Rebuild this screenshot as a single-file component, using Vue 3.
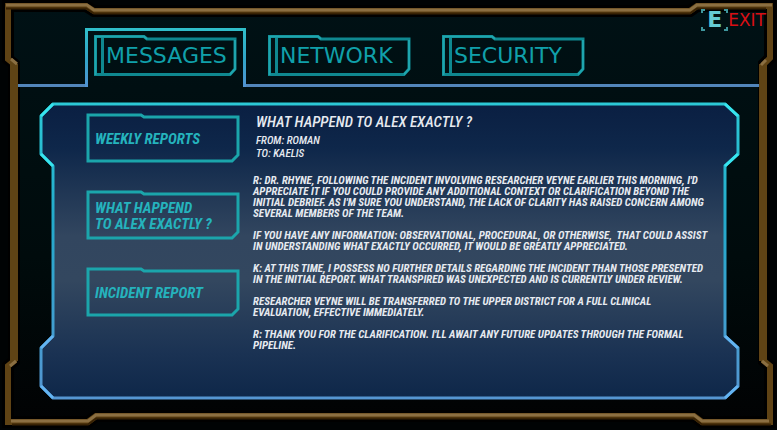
<template>
  <div class="terminal">
    <svg class="frame" viewBox="0 0 777 430" preserveAspectRatio="none" aria-hidden="true">
      <defs>
        <linearGradient id="screenFill" x1="0" y1="0" x2="0" y2="1">
          <stop offset="0" stop-color="#001115" />
          <stop offset="0.6" stop-color="#000b0c" />
          <stop offset="1" stop-color="#010203" />
        </linearGradient>
      </defs>
      <path :d="framePath" fill="url(#screenFill)" stroke="#000" stroke-width="12" />
      <path :d="framePath" fill="none" stroke="#5f4315" stroke-width="6" />
      <path d="M14 64V361M763 64V361" stroke="#5f4315" stroke-width="8" />
      <path d="M6 8.500H86L94 13.500H690L697 8.500H766M12 424.500H88L96 418.500H694L702 424.500H771" class="frame-shade" />
      <path d="M6 5H87L94 10H690L697 5H772M11 421H88L96 415H694L702 421H769" class="frame-light" />
      <path d="M11 59L17 64M766 60L761 65M10 366L16 361M762 361L768 366" class="frame-light" />
    </svg>

    <nav class="tabs">
      <span class="line-start"></span>
      <div
        v-for="tab in tabs"
        :key="tab"
        class="tab-slot"
        :class="{ active: tab === activeTab }"
      >
        <button class="tab" type="button" @click="activeTab = tab">
          <svg class="outline" viewBox="0 0 143 41" preserveAspectRatio="none" aria-hidden="true">
            <path d="M1.500 1.500H50L53 4H141V34L136 39.500H1.500ZM8.500 2V39" stroke="#0f8890" />
            <path d="M1.500 40V1.500H50L53 4M141 5V34L136 39.500" stroke="#1fa5ae" class="thin" />
          </svg>
          <span>{{ tab }}</span>
        </button>
      </div>
      <span class="line-end"></span>
    </nav>

    <button class="exit" type="button">
      <span class="key">
        <svg viewBox="0 0 27 22" aria-hidden="true">
          <path d="M1 4V1H4M23 1H26V4M26 18V21H23M4 21H1V18" />
        </svg>
        <span>E</span>
      </span>
      <span class="exit-label">EXIT</span>
    </button>

    <main class="panel">
      <svg class="outline" viewBox="0 0 701 298" preserveAspectRatio="none" aria-hidden="true">
        <defs>
          <linearGradient id="panelFill" x1="0" y1="0" x2="0" y2="1">
            <stop offset="0" stop-color="#0a1f42" />
            <stop offset="0.15" stop-color="#0e274a" />
            <stop offset="0.45" stop-color="#32465f" />
            <stop offset="0.6" stop-color="#33475f" />
            <stop offset="0.85" stop-color="#1a3253" />
            <stop offset="1" stop-color="#0e2749" />
          </linearGradient>
          <linearGradient id="panelLine" x1="0" y1="0" x2="0" y2="1">
            <stop offset="0" stop-color="#2cc9d6" />
            <stop offset="0.4" stop-color="#24aacb" />
            <stop offset="1" stop-color="#5596d2" />
          </linearGradient>
        </defs>
        <path
          d="M14 2H686L699 14V52L686 64V234L699 246V284L686 296H14L2 284V246L14 234V64L2 52V14Z"
          fill="url(#panelFill)"
          stroke="url(#panelLine)"
        />
        <path d="M2 14L14 2M686 2L699 14M2 52L14 64M699 52L686 64" stroke="#37e4ee" />
        <path d="M2 246L14 234M686 234L699 246M2 284L14 296M699 284L686 296" stroke="#63b4f2" />
      </svg>

      <ul class="reports">
        <li v-for="report in reports" :key="report">
          <button class="report" type="button">
            <svg class="outline" viewBox="0 0 154 50" preserveAspectRatio="none" aria-hidden="true">
              <path d="M2 2H55L58 4H152V42L146 48H2Z" stroke="#1ba5ab" />
            </svg>
            <span>{{ report }}</span>
          </button>
        </li>
      </ul>

      <article class="message">
        <h1>WHAT HAPPEND TO ALEX EXACTLY ?</h1>
        <p class="meta">FROM: ROMAN</p>
        <p class="meta">TO: KAELIS</p>
        <div class="body">
          <p v-for="text in paragraphs" :key="text">{{ text }}</p>
        </div>
      </article>
    </main>
  </div>
</template>

<script setup>
import { ref } from 'vue'

const framePath =
  'M8 6H86L94 11H690L697 6H770V58L764 64V361L770 366V422H702L694 416H96L88 422H8V366L14 361V64L8 59Z'

const tabs = ['MESSAGES', 'NETWORK', 'SECURITY']
const activeTab = ref('MESSAGES')

const reports = ['WEEKLY REPORTS', 'WHAT HAPPEND\nTO ALEX EXACTLY ?', 'INCIDENT REPORT']

const paragraphs = [
  "R: DR. RHYNE, FOLLOWING THE INCIDENT INVOLVING RESEARCHER VEYNE EARLIER THIS MORNING, I'D\nAPPRECIATE IT IF YOU COULD PROVIDE ANY ADDITIONAL CONTEXT OR CLARIFICATION BEYOND THE\nINITIAL DEBRIEF. AS I'M SURE YOU UNDERSTAND, THE LACK OF CLARITY HAS RAISED CONCERN AMONG\nSEVERAL MEMBERS OF THE TEAM.",
  'IF YOU HAVE ANY INFORMATION: OBSERVATIONAL, PROCEDURAL, OR OTHERWISE,  THAT COULD ASSIST\nIN UNDERSTANDING WHAT EXACTLY OCCURRED, IT WOULD BE GREATLY APPRECIATED.',
  'K: AT THIS TIME, I POSSESS NO FURTHER DETAILS REGARDING THE INCIDENT THAN THOSE PRESENTED\nIN THE INITIAL REPORT. WHAT TRANSPIRED WAS UNEXPECTED AND IS CURRENTLY UNDER REVIEW.',
  'RESEARCHER VEYNE WILL BE TRANSFERRED TO THE UPPER DISTRICT FOR A FULL CLINICAL\nEVALUATION, EFFECTIVE IMMEDIATELY.',
  "R: THANK YOU FOR THE CLARIFICATION. I'LL AWAIT ANY FUTURE UPDATES THROUGH THE FORMAL\nPIPELINE."
]
</script>

<style>
body {
  margin: 0;
  background: #000304;
}
</style>

<style scoped>
.terminal {
  position: relative;
  display: flex;
  flex-direction: column;
  box-sizing: border-box;
  min-height: 100vh;
  padding: 28px 18px 30px;
  font-family: 'Roboto Condensed', Roboto, sans-serif;
}

button {
  margin: 0;
  padding: 0;
  border: 0;
  background: none;
  font: inherit;
  cursor: pointer;
}

.frame,
.outline {
  position: absolute;
  inset: 0;
  width: 100%;
  height: 100%;
}

.frame .frame-light {
  fill: none;
  stroke: #8b6f42;
  stroke-width: 3;
}

.frame .frame-shade {
  fill: none;
  stroke: #382204;
  stroke-width: 2;
}

.outline path {
  stroke-width: 3;
  vector-effect: non-scaling-stroke;
}

.tab .outline path,
.report .outline path {
  fill: none;
}

.outline .thin {
  stroke-width: 2;
}

.tabs {
  position: relative;
  display: flex;
}

.line-start,
.line-end {
  border-bottom: 3px solid #5286bb;
}

.line-start {
  width: 67px;
}

.line-end {
  flex: 1;
}

.tab-slot {
  padding: 7px 9px 8px 22px;
  border-bottom: 3px solid #5286bb;
}

.tab-slot.active {
  padding: 4px 6px 11px;
  border: 3px solid;
  border-bottom: 0;
  border-image: linear-gradient(#30bfca, #31a5c8 50%, #5591d4) 3;
}

.tab {
  position: relative;
  display: block;
  width: 143px;
  height: 41px;
  padding-left: 12px;
  font-family: 'DejaVu Sans', sans-serif;
  font-size: 22px;
  line-height: 41px;
  text-align: left;
  color: #10a0aa;
}

.tab span {
  position: relative;
}

.exit {
  position: absolute;
  top: 9px;
  right: 11px;
  display: flex;
  align-items: center;
  font-family: 'DejaVu Sans', sans-serif;
}

.key {
  position: relative;
  width: 27px;
  height: 22px;
  font-size: 22px;
  font-weight: 700;
  line-height: 22px;
  color: #64cbd4;
}

.key svg {
  position: absolute;
  inset: 0;
}

.key path {
  fill: none;
  stroke: #3f969d;
  stroke-width: 2;
}

.exit-label {
  font-size: 17px;
  line-height: 22px;
  color: #d80f14;
}

.panel {
  position: relative;
  display: flex;
  flex: 1;
  gap: 13px;
  margin: 15px 19px 0 21px;
  padding: 10px 15px 10px 47px;
}

.reports {
  position: relative;
  display: flex;
  flex: none;
  flex-direction: column;
  gap: 27px;
  width: 154px;
  margin: 0;
  padding: 1px 0 0;
  list-style: none;
}

.report {
  position: relative;
  display: flex;
  align-items: center;
  width: 100%;
  height: 50px;
  padding: 2px 0 0 9px;
  font-size: 15px;
  font-style: italic;
  font-weight: 700;
  line-height: 16px;
  text-align: left;
  white-space: pre;
  color: #25b3bd;
}

.report span {
  position: relative;
}

.message {
  position: relative;
  flex: 1;
  min-width: 0;
  font-style: italic;
  color: #e6eaf0;
}

.message h1 {
  margin: 0 0 2px;
  padding-left: 3px;
  font-size: 15px;
  font-weight: 500;
  line-height: 20px;
}

.meta {
  margin: 0;
  padding-left: 3px;
  font-size: 11px;
  font-weight: 500;
  line-height: 13px;
}

.body {
  margin-top: 15px;
  font-size: 11px;
  font-weight: 700;
  line-height: 11px;
  white-space: pre-wrap;
}

.body p {
  margin: 0 0 11px;
}

.body p:last-child {
  margin-bottom: 0;
}
</style>
